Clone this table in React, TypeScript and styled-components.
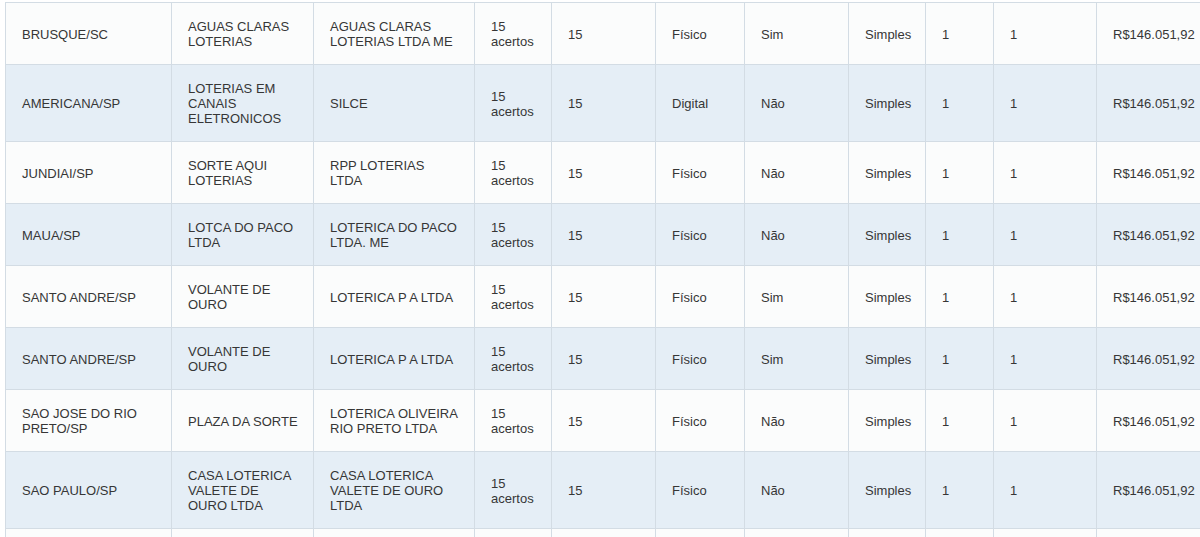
import React from "react";
import styled, { createGlobalStyle } from "styled-components";

const Global = createGlobalStyle`
  html, body {
    margin: 0;
    padding: 0;
    background: #ffffff;
    overflow: hidden;
    font-family: "Liberation Sans", Arial, sans-serif;
  }
`;

const Page = styled.div`
  padding: 2px 0 0 5px;
  width: 1300px;
`;

const Table = styled.table`
  border-collapse: collapse;
  table-layout: fixed;
  width: 1221px;
  font-family: "Liberation Sans", Arial, sans-serif;
  font-size: 13px;
  line-height: 15px;
  color: #363636;
`;

const Row = styled.tr<{ $alt: boolean }>`
  background: ${(p) => (p.$alt ? "#e5eef6" : "#fbfcfc")};
`;

const Cell = styled.td<{ $nowrap?: boolean }>`
  border: 1px solid #d3dce4;
  padding: 16px 14px 15px 16px;
  vertical-align: middle;
  text-align: left;
  word-wrap: break-word;
  white-space: ${(p) => (p.$nowrap ? "nowrap" : "normal")};
`;

const widths = [166, 142, 161, 77, 104, 89, 104, 77, 68, 103, 130];

type R = [string, string, string, string, string];

const rows: R[] = [
  ["BRUSQUE/SC", "AGUAS CLARAS LOTERIAS", "AGUAS CLARAS LOTERIAS LTDA ME", "Físico", "Sim"],
  ["AMERICANA/SP", "LOTERIAS EM CANAIS ELETRONICOS", "SILCE", "Digital", "Não"],
  ["JUNDIAI/SP", "SORTE AQUI LOTERIAS", "RPP LOTERIAS LTDA", "Físico", "Não"],
  ["MAUA/SP", "LOTCA DO PACO LTDA", "LOTERICA DO PACO LTDA. ME", "Físico", "Não"],
  ["SANTO ANDRE/SP", "VOLANTE DE OURO", "LOTERICA P A LTDA", "Físico", "Sim"],
  ["SANTO ANDRE/SP", "VOLANTE DE OURO", "LOTERICA P A LTDA", "Físico", "Sim"],
  ["SAO JOSE DO RIO PRETO/SP", "PLAZA DA SORTE", "LOTERICA OLIVEIRA RIO PRETO LTDA", "Físico", "Não"],
  ["SAO PAULO/SP", "CASA LOTERICA VALETE DE OURO LTDA", "CASA LOTERICA VALETE DE OURO LTDA", "Físico", "Não"],
  ["", "", "", "", ""],
];

export default function App() {
  return (
    <>
      <Global />
      <Page>
        <Table>
          <colgroup>
            {widths.map((w, i) => (
              <col key={i} style={{ width: w }} />
            ))}
          </colgroup>
          <tbody>
            {rows.map((r, i) => {
              const empty = r[0] === "";
              return (
                <Row key={i} $alt={i % 2 === 1}>
                  <Cell>{r[0]}</Cell>
                  <Cell>{r[1]}</Cell>
                  <Cell>{r[2]}</Cell>
                  <Cell>{empty ? "" : "15 acertos"}</Cell>
                  <Cell>{empty ? "" : "15"}</Cell>
                  <Cell>{r[3]}</Cell>
                  <Cell>{r[4]}</Cell>
                  <Cell $nowrap>{empty ? "" : "Simples"}</Cell>
                  <Cell>{empty ? "" : "1"}</Cell>
                  <Cell>{empty ? "" : "1"}</Cell>
                  <Cell $nowrap>{empty ? "" : "R$146.051,92"}</Cell>
                </Row>
              );
            })}
          </tbody>
        </Table>
      </Page>
    </>
  );
}
